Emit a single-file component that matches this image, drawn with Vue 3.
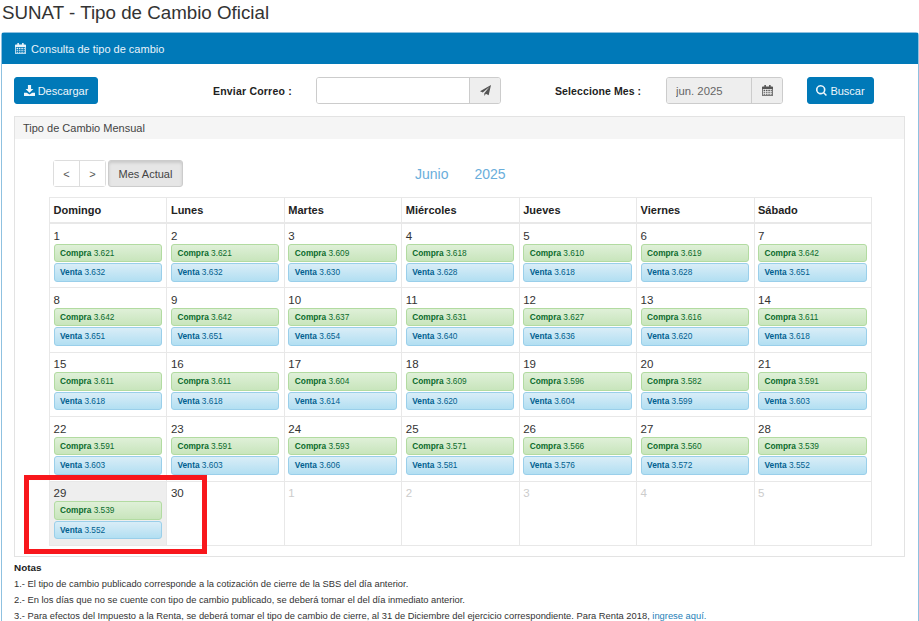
<template>
  <div class="page">
    <h1 class="title">SUNAT - Tipo de Cambio Oficial</h1>

    <section class="panel">
      <header class="panel-head">
        <svg class="ico head-ico" viewBox="0 0 14 14"><path d="M3 0h2v2h4V0h2v2h2a1 1 0 0 1 1 1v10a1 1 0 0 1-1 1H1a1 1 0 0 1-1-1V3a1 1 0 0 1 1-1h2zM1 5v8h12V5zm1 1h2v1.5H2zm3 0h2v1.5H5zm3 0h2v1.5H8zm3 0h1.5v1.5H11zM2 8.500h2V10H2zm3 0h2V10H5zm3 0h2V10H8zm3 0h1.500V10H11zM2 11h2v1.500H2zm3 0h2v1.500H5zm3 0h2v1.500H8zm3 0h1.500v1.500H11z" fill-rule="evenodd"/></svg>
        Consulta de tipo de cambio
      </header>

      <div class="panel-body">
        <div class="toolbar">
          <button class="btn-blue descargar">
            <svg class="ico" viewBox="0 0 14 14"><path d="M5 0h4v5h3L7 10 2 5h3zM0 10h3.500L7 12l3.500-2H14v4H0z"/></svg>
            Descargar
          </button>
          <label class="lbl correo-lbl">Enviar Correo :</label>
          <div class="group correo">
            <input class="field" type="text" />
            <span class="addon">
              <svg class="ico send" viewBox="0 0 14 14"><path d="M14 0 11 13 7.500 11 5.500 14V10.500L12 2.500 3.500 9.500 0 8z"/></svg>
            </span>
          </div>
          <label class="lbl mes-lbl">Seleccione Mes :</label>
          <div class="group mes">
            <input class="field disabled" type="text" value="jun. 2025" disabled />
            <span class="addon">
              <svg class="ico cal" viewBox="0 0 14 14"><path d="M3 0h2v2h4V0h2v2h2a1 1 0 0 1 1 1v10a1 1 0 0 1-1 1H1a1 1 0 0 1-1-1V3a1 1 0 0 1 1-1h2zM1 5v8h12V5zm1 1h2v1.500H2zm3 0h2v1.500H5zm3 0h2v1.500H8zm3 0h1.500v1.500H11zM2 8.500h2V10H2zm3 0h2V10H5zm3 0h2V10H8zm3 0h1.500V10H11zM2 11h2v1.500H2zm3 0h2v1.500H5zm3 0h2v1.500H8zm3 0h1.500v1.500H11z" fill-rule="evenodd"/></svg>
            </span>
          </div>
          <button class="btn-blue buscar">
            <svg class="ico" viewBox="0 0 14 14"><path d="M6 0a6 6 0 0 1 4.800 9.600L14 12.800 12.600 14 9.400 10.900A6 6 0 1 1 6 0zm0 2a4 4 0 1 0 0 8 4 4 0 0 0 0-8z" fill-rule="evenodd"/></svg>
            Buscar
          </button>
        </div>

        <section class="inner">
          <header class="inner-head">Tipo de Cambio Mensual</header>
          <div class="inner-body">
            <div class="cal-bar">
              <div class="pager">
                <button>&lt;</button>
                <button>&gt;</button>
              </div>
              <button class="hoy">Mes Actual</button>
              <div class="mes-titulo"><span>Junio</span><span>2025</span></div>
            </div>

            <table class="cal-table">
              <thead>
                <tr><th v-for="d in dias" :key="d">{{ d }}</th></tr>
              </thead>
              <tbody>
                <tr v-for="(sem, i) in semanas" :key="i">
                  <td v-for="c in sem" :key="c.key" :class="{ hoyc: c.dia === 29 && !c.fuera }">
                    <div :class="['num', { fuera: c.fuera }]">{{ c.dia }}</div>
                    <template v-if="c.compra">
                      <div class="tag compra"><b>Compra</b> {{ c.compra }}</div>
                      <div class="tag venta"><b>Venta</b> {{ c.venta }}</div>
                    </template>
                  </td>
                </tr>
              </tbody>
            </table>
          </div>
        </section>

        <div class="notas">
          <strong>Notas</strong>
          <p>1.- El tipo de cambio publicado corresponde a la cotización de cierre de la SBS del día anterior.</p>
          <p>2.- En los días que no se cuente con tipo de cambio publicado, se deberá tomar el del día inmediato anterior.</p>
          <p>3.- Para efectos del Impuesto a la Renta, se deberá tomar el tipo de cambio de cierre, al 31 de Diciembre del ejercicio correspondiente. Para Renta 2018, <a href="#">ingrese aquí.</a></p>
        </div>
      </div>
    </section>

    <div class="marca"></div>
  </div>
</template>

<script setup>
const dias = ['Domingo', 'Lunes', 'Martes', 'Miércoles', 'Jueves', 'Viernes', 'Sábado']

// [compra, venta] por dia de junio
const tasas = [
  ['3.621', '3.632'], ['3.621', '3.632'], ['3.609', '3.630'], ['3.618', '3.628'], ['3.610', '3.618'], ['3.619', '3.628'], ['3.642', '3.651'],
  ['3.642', '3.651'], ['3.642', '3.651'], ['3.637', '3.654'], ['3.631', '3.640'], ['3.627', '3.636'], ['3.616', '3.620'], ['3.611', '3.618'],
  ['3.611', '3.618'], ['3.611', '3.618'], ['3.604', '3.614'], ['3.609', '3.620'], ['3.596', '3.604'], ['3.582', '3.599'], ['3.591', '3.603'],
  ['3.591', '3.603'], ['3.591', '3.603'], ['3.593', '3.606'], ['3.571', '3.581'], ['3.566', '3.576'], ['3.560', '3.572'], ['3.539', '3.552'],
  ['3.539', '3.552']
]

const celdas = []
for (let d = 1; d <= 30; d++) {
  const t = tasas[d - 1] || []
  celdas.push({ key: 'j' + d, dia: d, compra: t[0], venta: t[1], fuera: false })
}
for (let d = 1; d <= 5; d++) {
  celdas.push({ key: 'f' + d, dia: d, fuera: true })
}

const semanas = []
for (let i = 0; i < celdas.length; i += 7) {
  semanas.push(celdas.slice(i, i + 7))
}
</script>

<style scoped>
.page {
  position: relative;
  height: 621px;
  overflow: hidden;
  font-family: "Liberation Sans", Arial, sans-serif;
  color: #333;
  background: #fff;
}

.title {
  margin: 0;
  padding: 2px 0 0 2px;
  height: 30px;
  box-sizing: border-box;
  font-size: 18.750px;
  line-height: 22px;
  font-weight: 400;
  color: #333;
}

.ico {
  width: 11px;
  height: 11px;
  fill: currentColor;
  flex: none;
}

/* === Panel principal === */
.panel {
  margin: 2px 0 0 1px;
  border: 1px solid #8fc1e0;
  border-radius: 3px 3px 0 0;
}

.panel-head {
  display: flex;
  align-items: center;
  gap: 5px;
  height: 31px;
  padding-left: 13px;
  background: #0079b8;
  color: #e8f3fa;
  font-size: 11px;
}

.panel-body {
  padding: 13px 12px 0;
}

/* === Barra de filtros === */
.toolbar {
  display: flex;
  align-items: center;
  height: 27px;
}

.btn-blue {
  display: flex;
  align-items: center;
  justify-content: center;
  gap: 3px;
  height: 27px;
  padding: 0;
  border: 1px solid #0079b8;
  border-radius: 3px;
  background: #0079b8;
  color: #eef6fb;
  font: 11px "Liberation Sans", Arial, sans-serif;
}

.descargar { width: 84px; }
.buscar { width: 67px; margin-left: 24px; }

.lbl {
  font-size: 10.500px;
  font-weight: 700;
  color: #222;
  white-space: nowrap;
  letter-spacing: 0.2px;
}

.correo-lbl { margin-left: 115px; width: 103px; }
.mes-lbl { margin-left: 54px; width: 111px; letter-spacing: 0.1px; }

.group {
  display: flex;
  height: 27px;
  box-sizing: border-box;
  border: 1px solid #ccc;
  border-radius: 3px;
  overflow: hidden;
}

.correo { width: 185px; }
.mes { width: 117px; }

.field {
  flex: 1;
  min-width: 0;
  border: 0;
  padding: 0 9px;
  background: #fff;
  font: 11.300px "Liberation Sans", Arial, sans-serif;
  color: #666;
}

.field.disabled {
  background: #eee;
}

.addon {
  display: flex;
  align-items: center;
  justify-content: center;
  width: 30px;
  border-left: 1px solid #ccc;
  background: #eee;
  color: #555;
}

/* === Calendario === */
.inner {
  margin-top: 12px;
  width: 891px;
  height: 441px;
  box-sizing: border-box;
  border: 1px solid #e3e3e3;
}

.inner-head {
  height: 22px;
  padding-left: 8px;
  background: #f5f5f5;
  font-size: 11px;
  line-height: 22px;
  color: #444;
}

.inner-body {
  padding: 21px 33px 0 34px;
}

.cal-bar {
  display: flex;
  align-items: center;
  height: 27px;
}

.pager {
  display: flex;
  width: 53px;
  height: 27px;
  box-sizing: border-box;
  border: 1px solid #ddd;
  border-radius: 3px;
  margin-left: 4px;
}

.pager button {
  flex: 1;
  padding: 0;
  border: 0;
  background: #fff;
  font: 11px "Liberation Sans", Arial, sans-serif;
  color: #555;
}

.pager button + button {
  border-left: 1px solid #ddd;
}

.hoy {
  width: 75px;
  height: 27px;
  margin-left: 2px;
  padding: 0;
  border: 1px solid #ccc;
  border-radius: 3px;
  background: #e6e6e6;
  box-shadow: inset 0 2px 3px rgba(0, 0, 0, 0.12);
  font: 11px "Liberation Sans", Arial, sans-serif;
  color: #444;
}

.mes-titulo {
  display: flex;
  gap: 26px;
  margin-left: 232px;
  font-size: 14px;
  color: #6aaedb;
}

.cal-table {
  width: 823px;
  margin-top: 10px;
  border-collapse: collapse;
  table-layout: fixed;
}

.cal-table th,
.cal-table td {
  border: 1px solid #e8e8e8;
  padding: 0 4.500px 0 3.500px;
  text-align: left;
  vertical-align: top;
}

.cal-table th {
  height: 24px;
  border-bottom-width: 2px;
  font-size: 11px;
  font-weight: 700;
  line-height: 24px;
  color: #222;
}

.cal-table td {
  height: 64.600px;
  box-sizing: border-box;
  padding-top: 5.500px;
}

.cal-table td.hoyc {
  background: #eee;
}

.num {
  height: 14px;
  font-size: 11.500px;
  line-height: 13px;
  color: #333;
}

.num.fuera {
  color: #ccc;
}

.tag {
  height: 18.500px;
  box-sizing: border-box;
  margin-bottom: 1px;
  padding-left: 5.500px;
  border: 1px solid;
  border-radius: 3px;
  font-size: 8.300px;
  line-height: 16.500px;
}

.tag b {
  font-weight: 700;
}

.compra {
  border-color: #b2dba1;
  background: linear-gradient(#dff0d8, #c8e5bc);
  color: #0b6b2c;
}

.venta {
  border-color: #9acfea;
  background: linear-gradient(#d9edf7, #b2dff2);
  color: #00608f;
}

/* === Notas === */
.notas {
  margin-top: 3px;
  font-size: 9.350px;
  line-height: 16px;
  color: #333;
}

.notas strong {
  display: block;
  font-size: 9.900px;
  color: #222;
}

.notas p {
  margin: 0;
}

.notas a {
  color: #1f7fb8;
  text-decoration: none;
}

/* Recuadro rojo sobre el dia 29 */
.marca {
  position: absolute;
  left: 24px;
  top: 475px;
  width: 183px;
  height: 79px;
  box-sizing: border-box;
  border: 5px solid #f8171c;
}
</style>

<style>
html, body {
  overflow: hidden;
}
</style>
